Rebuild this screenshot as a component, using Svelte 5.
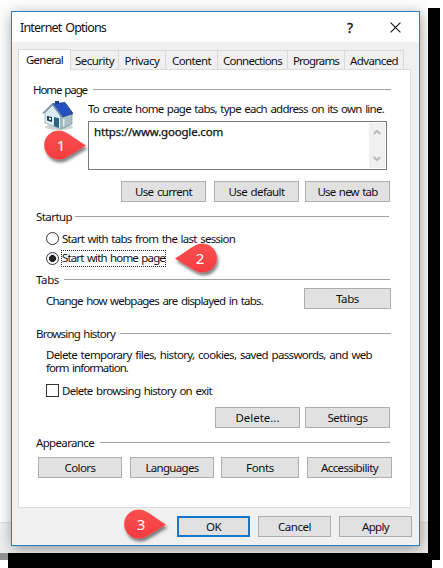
<script>
  function fit(node, width) {
    node.style.letterSpacing = '0px';
    const natural = node.getBoundingClientRect().width;
    const n = node.textContent.length;
    const s = (width - natural) / n;
    node.style.letterSpacing = s.toFixed(3) + 'px';
  }

  const tabs = [
    ['Security', 48, 39],
    ['Privacy', 47, 35],
    ['Content', 52, 39],
    ['Connections', 70, 59],
    ['Programs', 57, 46],
    ['Advanced', 59, 48]
  ];
</script>

{#snippet t(text, w)}<span class="t" use:fit={w}>{text}</span>{/snippet}
{#snippet head(text, w, gap)}
  <span class="t" use:fit={w}>{text}</span><i class="rule" style:margin-left="{gap}px"></i>
{/snippet}
{#snippet pin(n, dir)}
  <svg width="56" height="44" viewBox="0 0 56 44">
    <defs>
      <filter id="sh{n}" x="-20%" y="-20%" width="150%" height="160%">
        <feDropShadow dx="1.5" dy="3" stdDeviation="1.7" flood-color="#000" flood-opacity=".5" />
      </filter>
      <linearGradient id="g{n}" x1="0" x2="0" y1="0" y2="1">
        <stop offset="0" stop-color="#fa5050" /><stop offset="1" stop-color="#f53b40" />
      </linearGradient>
    </defs>
    <g filter="url(#sh{n})">
      <path
        transform={dir === 'left' ? 'translate(56 0) scale(-1 1)' : undefined}
        d="M48 19.5C42 16 34 10 28.500 6.800A14.500 14.500 0 1 0 28.500 31.200C34 28.500 42 23 48 19.500Z"
        fill="url(#g{n})" />
    </g>
    <text x={dir === 'left' ? 33 : 23} y="25" text-anchor="middle">{n}</text>
  </svg>
{/snippet}

<main>
  <div class="black right"></div>
  <div class="black bottom"></div>
  <div class="backdrop"><div class="lower"></div></div>
  <div class="corner"></div>

  <section class="dialog">
    <header>
      <span class="title" use:fit={86}>Internet Options</span>
      <span class="help">?</span>
      <svg width="11" height="11" viewBox="0 0 11 11"><path d="M.6.6l9.800 9.800M10.400.6L.6 10.400" stroke="#111" stroke-width="1.100" /></svg>
    </header>

    <nav>
      <div class="tab active">{@render t('General', 37)}</div>
      {#each tabs as [name, w, tw]}
        <div class="tab" style:width="{w}px">{@render t(name, tw)}</div>
      {/each}
    </nav>

    <div class="panel">
      <div class="head home">{@render head('Home page', 54, 6)}</div>
      <div class="homerow">
        <svg class="house" width="34" height="30" viewBox="0 0 34 30">
          <ellipse cx="18" cy="26" rx="14" ry="3" fill="#ccd5cf" />
          <path d="M4 12L12 4 20 16V28L4 22Z" fill="#dcecf4" stroke="#8fa5b2" stroke-width=".7" />
          <path d="M20 15L31 13V23L20 28Z" fill="#a9bfca" stroke="#7892a0" stroke-width=".7" />
          <path d="M14 2V0h4v4z" fill="#183b8f" />
          <path d="M11 3L24 1.500 32 12.500 21 16Z" fill="#2451bd" stroke="#173783" stroke-width=".8" />
          <path d="M2 12.500L11.500 3 21 16" fill="none" stroke="#708fa9" stroke-width="1.500" />
          <path d="M6 15l5 1v5l-5-1.500z" fill="#233f50" />
          <path d="M8 16.500l2 .4v2l-2-.5z" fill="#dff" />
          <path d="M13 16l5 1.300V27l-5-2z" fill="#2d6480" />
          <path d="M22 18l1.500-.3v7l-1.500.5z" fill="#dcecf2" />
        </svg>
        <div class="homecol">
          <div class="hint">{@render t('To create home page tabs, type each address on its own line.', 296)}</div>
          <div class="address">
            <span class="t url" use:fit={129}>https://www.google.com</span>
            <div class="scroll">
              <svg width="8" height="6" viewBox="0 0 8 6"><path d="M.8 5L4 1.800 7.200 5" /></svg>
              <svg width="8" height="6" viewBox="0 0 8 6"><path d="M.8 1L4 4.200 7.200 1" /></svg>
            </div>
          </div>
        </div>
      </div>
      <div class="buttons three">
        <div class="btn">{@render t('Use current', 57)}</div>
        <div class="btn">{@render t('Use default', 56)}</div>
        <div class="btn">{@render t('Use new tab', 60)}</div>
      </div>

      <div class="head startup">{@render head('Startup', 36, 3)}</div>
      <div class="opt first"><i class="radio"></i>{@render t('Start with tabs from the last session', 173)}</div>
      <div class="opt"><i class="radio on"></i><span class="focus">{@render t('Start with home page', 103)}</span></div>

      <div class="head tabshead">{@render head('Tabs', 23, 5)}</div>
      <div class="tabsrow">
        {@render t('Change how webpages are displayed in tabs.', 217)}
        <div class="btn">{@render t('Tabs', 23)}</div>
      </div>

      <div class="head history">{@render head('Browsing history', 79, 5)}</div>
      <div class="para">
        <div>{@render t('Delete temporary files, history, cookies, saved passwords, and web', 326)}</div>
        <div>{@render t('form information.', 82)}</div>
      </div>
      <div class="opt check"><i class="box"></i>{@render t('Delete browsing history on exit', 150)}</div>
      <div class="buttons two">
        <div class="btn">{@render t('Delete...', 44)}</div>
        <div class="btn">{@render t('Settings', 40)}</div>
      </div>

      <div class="head appear">{@render head('Appearance', 58, 6)}</div>
      <div class="buttons four">
        <div class="btn">{@render t('Colors', 31)}</div>
        <div class="btn">{@render t('Languages', 53)}</div>
        <div class="btn">{@render t('Fonts', 28)}</div>
        <div class="btn">{@render t('Accessibility', 57)}</div>
      </div>
    </div>

    <footer>
      <div class="btn ok">{@render t('OK', 15)}</div>
      <div class="btn">{@render t('Cancel', 33)}</div>
      <div class="btn">{@render t('Apply', 27)}</div>
    </footer>
  </section>

  <div class="pin p1">{@render pin(1, 'right')}</div>
  <div class="pin p2">{@render pin(2, 'left')}</div>
  <div class="pin p3">{@render pin(3, 'right')}</div>
</main>

<style>
  :global(body) { background: #fff; }
  * { box-sizing: border-box; }
  main {
    position: relative;
    width: 443px;
    height: 568px;
    padding: 11px 0 0 11px;
    overflow: hidden;
    background: #fff;
    font: 11.5px/13px 'Noto Sans', 'DejaVu Sans', sans-serif;
    word-spacing: 1.2px;
    color: #101014;
  }
  .black { position: absolute; background: #000; }
  .right { left: 428px; top: 8px; width: 12px; height: 552px; }
  .bottom { left: 8px; top: 553px; width: 424px; height: 15px; }
  .backdrop {
    position: absolute; left: 0; top: 0; width: 428px; height: 553px;
    overflow: hidden; background: #fdfdfd;
  }
  .lower { margin-top: 522px; height: 31px; background: #efefef; border-top: 1px solid #ddd; }
  .corner { position: absolute; left: 0; top: 553px; width: 8px; height: 7px; background: #929292; }
  .backdrop::after {
    content: ''; position: absolute; left: 11px; top: 11px; width: 409px; height: 535px;
    box-shadow: 1px 3px 13px rgba(0, 0, 0, .38);
  }
  .dialog {
    position: relative;
    display: flex;
    flex-direction: column;
    width: 409px;
    height: 535px;
    border: 1px solid #2b7fc0;
    background: #f0f0f0;
  }
  header {
    display: flex;
    align-items: center;
    height: 30px;
    padding: 0 18px 0 8px;
    background: #fff;
  }
  .title { font-size: 12.5px; white-space: pre; }
  .help { margin-left: auto; margin-right: 37px; font-size: 14px; -webkit-text-stroke: .3px #111; }
  .t { white-space: pre; flex: none; display: inline-block; }
  nav { display: flex; align-items: flex-end; height: 27px; padding-left: 6px; }
  .tab {
    flex: none;
    display: flex;
    justify-content: center;
    align-items: center;
    height: 19px;
    padding-top: 1px;
    border: 1px solid #d9d9d9;
    border-left: 0;
    border-bottom: 0;
  }
  .tab.active {
    position: relative;
    z-index: 1;
    width: 53px;
    height: 21px;
    margin-bottom: -1px;
    border-left: 1px solid #d9d9d9;
    background: #fff;
    padding: 0 0 1px;
  }
  .panel {
    flex: none;
    width: 393px;
    height: 439px;
    margin-left: 6px;
    border: 1px solid #dcdcdc;
    background: #fff;
  }
  .head { display: flex; align-items: center; height: 14px; margin-left: 17px; width: 355px; }
  .rule { flex: 1; height: 1px; background: #a0a0a0; }
  .home { margin-top: 12px; margin-left: 14px; width: 358px; }
  .homerow { display: flex; height: 74px; padding-left: 21px; }
  .house { flex: none; margin-top: 5px; margin-left: 1px; }
  .homecol { margin-left: 13px; }
  .hint { height: 25px; padding-top: 6px; }
  .address {
    display: flex; justify-content: space-between;
    width: 299px; height: 49px; padding: 1px 1px 1px 5px;
    border: 1px solid #7a7a7a;
  }
  .url { padding-top: 2px; -webkit-text-stroke: .25px #101014; }
  .scroll {
    display: flex; flex-direction: column; justify-content: space-between; align-items: center;
    width: 16px; height: 45px; padding: 6px 0; background: #f0f0f0;
  }
  .scroll path { fill: none; stroke: #b8b8b8; stroke-width: 1.900; }
  .btn {
    flex: none;
    display: flex; justify-content: center; align-items: center;
    width: 85px; height: 21px;
    border: 1px solid #adadad;
    background: #e1e1e1;
  }
  .buttons { display: flex; gap: 8px; }
  .three { margin: 11px 0 0 102px; }
  .three .btn:last-child { margin-left: -2px; }
  .startup { margin-top: 7px; width: 353px; }
  .opt { display: flex; align-items: center; height: 20px; margin-left: 27px; gap: 3px; }
  .first { margin-top: 5px; }
  .radio { width: 13px; height: 13px; border: 1px solid #333; border-radius: 50%; background: #fff; }
  .radio.on { background: radial-gradient(circle, #222 0 3.200px, #fff 3.800px); }
  .focus { height: 15px; line-height: 14px; outline: 1px dotted #222; }
  .tabshead { margin-top: 4px; width: 354px; }
  .tabsrow { display: flex; justify-content: space-between; align-items: center; height: 21px; margin: 2px 19px 0 27px; }
  .tabsrow .btn { width: 87px; }
  .tabsrow > .t, .tabsrow :global(> .t) { padding-top: 3px; }
  .history { margin-top: 17px; }
  .para { margin: 8px 0 0 27px; line-height: 13px; }
  .para div { height: 13px; }
  .check { margin-top: 6px; }
  .box { width: 13px; height: 13px; border: 1px solid #333; background: #fff; }
  .two { margin: 7px 0 0 196px; gap: 5px; }
  .appear { margin-top: 7px; width: 354px; }
  .four { margin: 8px 0 0 19px; }
  .four .btn:nth-child(-n + 2) { width: 84px; }
  .four .btn:nth-child(3) { width: 78px; margin-left: -1px; }
  footer { display: flex; gap: 8px; padding: 8px 0 0 165px; }
  footer .btn { width: 73px; }
  .ok.btn { border: 2px solid #1277c8; }
  .pin { position: absolute; width: 56px; height: 44px; }
  .pin text { font: 15px 'Noto Sans', sans-serif; fill: #fff; }
  .p1 { left: 38px; top: 126px; }
  .p2 { left: 167px; top: 239px; }
  .p3 { left: 118px; top: 505px; }
</style>
